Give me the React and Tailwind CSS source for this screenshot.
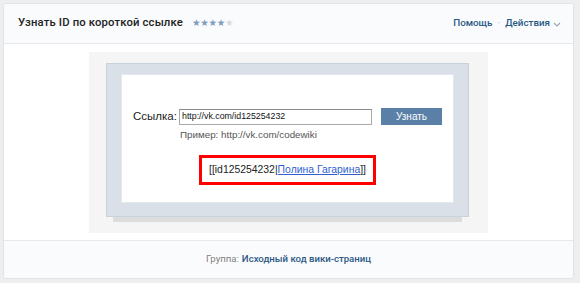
export default function App() {
  return (
    <div className="w-[580px] h-[283px] bg-[#edeef0] pt-[3px] pl-[3px] font-['Roboto',sans-serif]">
      <div className="w-[571px] h-[276px] bg-white border border-[#e3e4e8] rounded-[3px] flex flex-col overflow-hidden">
        {/* Header */}
        <div className="h-[40px] bg-[#fafbfc] border-b border-[#e7e8ec] flex items-center pl-[14px] pr-[12px]">
          <span className="text-[11.3px] text-[#222] font-medium tracking-[0.15px]">Узнать ID по короткой ссылке</span>
          <span className="ml-[9px] text-[9.5px] tracking-[-0.3px] text-[#7f9dbf] font-['DejaVu_Sans',sans-serif]">
            ★★★★<span className="text-[#d5dbe3]">★</span>
          </span>
          <div className="ml-auto flex items-center text-[9.8px] text-[#2a5885] font-medium">
            <span>Помощь</span>
            <span className="mx-[5px] text-[#b8c3cf]">·</span>
            <span>Действия</span>
            <svg width="8" height="5" viewBox="0 0 8 5" className="ml-[3px] mt-[1px]">
              <path d="M1 1 L4 4 L7 1" fill="none" stroke="#9aa8b7" strokeWidth="1.1" />
            </svg>
          </div>
        </div>

        {/* Body */}
        <div className="flex-1 flex justify-center pt-[8px]">
          <div className="w-[399px] h-[181px] bg-[#f5f5f5] pt-[11px] pl-[17px] font-['Liberation_Sans',Arial,sans-serif]">
            <div className="w-[363px] bg-[#d9e0e8] border border-[#c8d2dd] pt-[10px] px-[14px] pb-[13px]">
              <div className="w-[333px] h-[129px] bg-white border border-[#e3e8ee] pt-[33px]">
                <div className="flex items-center h-[17px]">
                  <span className="ml-[11px] w-[46px] shrink-0 whitespace-nowrap text-[11.5px] text-[#222]">Ссылка:</span>
                  <div className="w-[193px] h-[16px] shrink-0 border border-[#a9a9a9] border-t-[#8a8a8a] flex items-center pl-[2px] text-[8.8px] text-[#111] whitespace-nowrap">
                    http://vk.com/id125254232
                  </div>
                  <div className="ml-[9px] w-[61px] h-[17px] shrink-0 bg-[#5b80a8] flex items-center justify-center text-[10px] text-white">
                    Узнать
                  </div>
                </div>
                <div className="ml-[58px] mt-[4px] text-[9.8px] leading-[12px] text-[#555] whitespace-nowrap">Пример: http://vk.com/codewiki</div>
                <div className="flex justify-center mt-[14px]">
                  <div className="w-[177px] h-[30px] border-[3px] border-[#ff0000] flex items-center justify-center text-[10.4px] text-[#222] whitespace-nowrap">
                    <span>[[id125254232|<span className="text-[#2f5fd0] underline">Полина Гагарина</span>]]</span>
                  </div>
                </div>
              </div>
            </div>
            <div className="ml-[7px] w-[349px] h-[5px] bg-[#dcdcdc]" />
          </div>
        </div>

        {/* Footer */}
        <div className="h-[38px] bg-[#fafbfc] border-t border-[#e7e8ec] flex items-center justify-center text-[9.6px]">
          <span className="text-[#828282]">Группа:</span>
          <span className="ml-[3px] text-[#2a5885] font-medium">Исходный код вики-страниц</span>
        </div>
      </div>
    </div>
  )
}
